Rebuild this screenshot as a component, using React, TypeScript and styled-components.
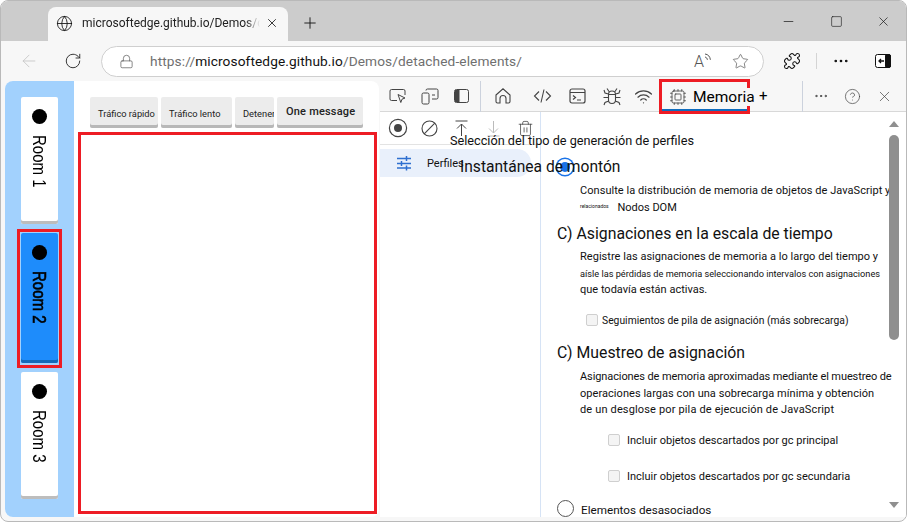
import styled, { createGlobalStyle } from "styled-components";
import {
  ArrowLeft,
  Cpu,
  Globe,
  Lock,
  Minus,
  MoreHorizontal,
  Plus,
  Puzzle,
  RotateCw,
  Square,
  Star,
  Trash2,
  Wifi,
  X,
  CircleHelp,
} from "lucide-react";

const rooms = [
  { name: "Room 1", height: 127, active: false },
  { name: "Room 2", height: 130, active: true },
  { name: "Room 3", height: 127, active: false },
];

const pageButtons = [
  { label: "Tráfico rápido", width: 68 },
  { label: "Tráfico lento", width: 71 },
  { label: "Detener", width: 39 },
];

export default function App() {
  return (
    <>
      <GlobalStyle />
      <Window>
        <TabStrip>
          <Tab>
            <Globe size={17} strokeWidth={1.2} />
            <TabTitle>microsoftedge.github.io/Demos/detached-elements/</TabTitle>
            <X size={14} strokeWidth={1.4} />
          </Tab>
          <NewTab>
            <Plus size={18} strokeWidth={1.2} />
          </NewTab>
          <WindowControls>
            <Minus size={15} strokeWidth={1.1} />
            <Square size={13} strokeWidth={1.1} />
            <X size={15} strokeWidth={1.1} />
          </WindowControls>
        </TabStrip>

        <Toolbar>
          <ToolbarIcon $color="#c4c4c4">
            <ArrowLeft size={20} strokeWidth={1} />
          </ToolbarIcon>
          <ToolbarIcon>
            <RotateCw size={18} strokeWidth={1.2} />
          </ToolbarIcon>
          <AddressBar>
            <Lock size={15} strokeWidth={1.1} />
            <Url>
              <Dim>https://</Dim>microsoftedge.github.io<Dim>/Demos/detached-elements/</Dim>
            </Url>
            <ReadAloud>
              A
              <svg width="10" height="11" viewBox="0 0 10 11" fill="none" stroke="#555" strokeWidth="1">
                <path d="M1 5c1.500.3 2.200 1.400 2.400 2.800M1 2c3.200.4 5 2.500 5.400 5.800" />
              </svg>
            </ReadAloud>
            <Star size={17} strokeWidth={1} />
          </AddressBar>
          <ToolbarEnd>
            <Puzzle size={18} strokeWidth={1.4} />
            <ToolbarDivider />
            <MoreHorizontal size={18} strokeWidth={1.6} />
            <SidebarIcon viewBox="0 0 16 14" width="16" height="14">
              <rect x="0.5" y="0.500" width="15" height="13" rx="2" fill="#fff" stroke="#111" />
              <rect x="10.500" y="0.500" width="5" height="13" rx="1.500" fill="#111" stroke="#111" />
              <path d="M9 7H4M6 5 4 7l2 2" stroke="#111" strokeWidth="1.300" fill="none" />
            </SidebarIcon>
          </ToolbarEnd>
        </Toolbar>

        <Content>
          <Page>
            <RoomRail>
              {rooms.map((room) => (
                <RoomTab key={room.name} $active={room.active} $height={room.height}>
                  <RoomDot />
                  <RoomLabel $active={room.active}>{room.name}</RoomLabel>
                </RoomTab>
              ))}
            </RoomRail>
            <ChatPane>
              <ButtonRow>
                {pageButtons.map((b) => (
                  <PageButton key={b.label} $width={b.width}>
                    {b.label}
                  </PageButton>
                ))}
                <MessageButton>One message</MessageButton>
              </ButtonRow>
              <ChatLog />
            </ChatPane>
          </Page>

          <DevTools>
            <DevTabs>
              <DevIcon $width={32}>
                <svg width="18" height="16" viewBox="0 0 18 16" fill="none" stroke="#444">
                  <path d="M8 12.500H2.500a1.500 1.500 0 0 1-1.500-1.500V3a1.500 1.500 0 0 1 1.500-1.500h12A1.500 1.500 0 0 1 16 3v4" />
                  <path d="M9 6.500l7 3.500-3 1.200-1.200 3.300z" />
                </svg>
              </DevIcon>
              <DevIcon $width={32}>
                <svg width="18" height="17" viewBox="0 0 18 17" fill="none" stroke="#444">
                  <rect x="1" y="5" width="7" height="11" rx="1.500" />
                  <path d="M5 2.500A1.500 1.500 0 0 1 6.500 1h9A1.500 1.500 0 0 1 17 2.500v7a1.500 1.500 0 0 1-1.500 1.500H11M11 7h3" />
                </svg>
              </DevIcon>
              <DevIcon $width={30}>
                <svg width="15" height="14" viewBox="0 0 15 14" fill="none" stroke="#444">
                  <rect x="0.500" y="0.500" width="14" height="13" rx="2" />
                  <rect x="1" y="1" width="4.500" height="12" fill="#444" stroke="none" />
                </svg>
              </DevIcon>
              <DevDivider />
              <DevIcon $width={44}>
                <svg width="18" height="18" viewBox="0 0 18 18" fill="none" stroke="#444" strokeWidth="1.100">
                  <path d="M2 8 9 1.800 16 8v6.500a1.500 1.500 0 0 1-1.500 1.500H12v-4.500a3 3 0 0 0-6 0V16H3.500A1.500 1.500 0 0 1 2 14.500z" />
                </svg>
              </DevIcon>
              <DevIcon $width={34}>
                <svg width="19" height="18" viewBox="0 0 19 18" fill="none" stroke="#444" strokeWidth="1.100">
                  <path d="M6 4.500 1.500 9 6 13.500M13 4.500 17.500 9 13 13.500M11 2.500 8 15.500" />
                </svg>
              </DevIcon>
              <DevIcon $width={36}>
                <svg width="17" height="16" viewBox="0 0 17 16" fill="none" stroke="#444" strokeWidth="1.200">
                  <rect x="1" y="1" width="15" height="14" rx="2" />
                  <path d="M1 4.500h15M4 7.500 6.500 9.500 4 11.500M8 12h4" />
                </svg>
              </DevIcon>
              <DevIcon $width={34}>
                <svg width="20" height="19" viewBox="0 0 20 19" fill="none" stroke="#444" strokeWidth="1.100">
                  <path d="M6.500 7.500a3.500 3.500 0 0 1 7 0V13a3.500 3.500 0 0 1-7 0z" />
                  <path d="M6.500 7.500h7M5 1.500 7.200 4.800M15 1.500 12.800 4.800M6.500 7 3 6 2 3M13.500 7 17 6 18 3M6.500 10.500H1.500M13.500 10.500h5M6.800 14 3 15.500 2 18M13.200 14 17 15.500 18 18" />
                </svg>
              </DevIcon>
              <DevIcon $width={28}>
                <Wifi size={19} strokeWidth={1.6} />
              </DevIcon>
              <MemoryTab>
                <Cpu size={18} strokeWidth={1.1} />
                <MemoryTitle>Memoria</MemoryTitle>
                <MemoryPlus>+</MemoryPlus>
              </MemoryTab>
              <DevTabsEnd>
                <MoreHorizontal size={16} strokeWidth={1.5} />
                <CircleHelp size={17} strokeWidth={1} />
                <X size={17} strokeWidth={1} />
              </DevTabsEnd>
            </DevTabs>

            <Panel>
              <ProfilesSide>
                <ProfilesTools>
                  <RecordIcon />
                  <svg width="17" height="17" viewBox="0 0 17 17" fill="none" stroke="#444" strokeWidth="1.100">
                    <circle cx="8.500" cy="8.500" r="7.500" />
                    <path d="M3.200 13.800 13.800 3.200" />
                  </svg>
                  <svg width="17" height="17" viewBox="0 0 17 17" fill="none" stroke="#444">
                    <path d="M2.500 1h12M8.500 16V4M4 8.500 8.500 4 13 8.500" />
                  </svg>
                  <svg width="17" height="17" viewBox="0 0 17 17" fill="none" stroke="#bbb">
                    <path d="M2.500 16h12M8.500 1v12M4 8.500 8.500 13 13 8.500" />
                  </svg>
                  <Trash2 size={17} strokeWidth={1.1} />
                </ProfilesTools>
                <ProfilesItem>
                  <svg width="16" height="16" viewBox="0 0 16 16" fill="none" stroke="#2e6fd0" strokeWidth="1.500">
                    <path d="M1 3.500h14M10.500 1v5M1 8.500h14M5.500 6v5M1 13h14M10.500 10.500V15.500" />
                  </svg>
                  <span>Perfiles</span>
                </ProfilesItem>
              </ProfilesSide>

              <ProfileOptions>
                <BlueRadio />
                <Paragraph $top={7} $lineHeight={17}>
                  <Line $spacing={0.05}>Consulte la distribución de memoria de objetos de JavaScript y</Line>
                  <Line>
                    <Tiny>relacionados</Tiny> Nodos DOM
                  </Line>
                </Paragraph>
                <Heading $top={7}>C) Asignaciones en la escala de tiempo</Heading>
                <Paragraph $top={4}>
                  <Line $spacing={0.03}>Registre las asignaciones de memoria a lo largo del tiempo y</Line>
                  <Line $size={9.200}>aísle las pérdidas de memoria seleccionando intervalos con asignaciones</Line>
                  <Line>que todavía están activas.</Line>
                </Paragraph>
                <CheckRow $indent={45} $top={12.5} $gap={4}>
                  <Check />
                  <CheckLabel $size={10.300} $spacing={0.02}>Seguimientos de pila de asignación (más sobrecarga)</CheckLabel>
                </CheckRow>
                <Heading $top={13}>C) Muestreo de asignación</Heading>
                <Paragraph $top={5}>
                  <Line $spacing={-0.1}>Asignaciones de memoria aproximadas mediante el muestreo de</Line>
                  <Line $spacing={0.05}>operaciones largas con una sobrecarga mínima y obtención</Line>
                  <Line $spacing={0.15}>de un desglose por pila de ejecución de JavaScript</Line>
                </Paragraph>
                <CheckRow $indent={67} $top={12.5} $gap={7}>
                  <Check />
                  <CheckLabel>Incluir objetos descartados por gc principal</CheckLabel>
                </CheckRow>
                <CheckRow $indent={67} $top={18} $gap={7}>
                  <Check />
                  <CheckLabel>Incluir objetos descartados por gc secundaria</CheckLabel>
                </CheckRow>
                <DetachedRow>
                  <EmptyRadio />
                  <span>Elementos desasociados</span>
                </DetachedRow>
              </ProfileOptions>

              <ScrollTrack>
                <ScrollArrow $dir="up" />
                <ScrollThumb />
                <ScrollArrow $dir="down" />
              </ScrollTrack>

              <SelectTitle>Selección del tipo de generación de perfiles</SelectTitle>
              <SnapshotTitle>Instantánea de montón</SnapshotTitle>
            </Panel>
          </DevTools>
        </Content>
      </Window>
    </>
  );
}

const font = `Roboto, "Noto Sans", "Liberation Sans", sans-serif`;

const GlobalStyle = createGlobalStyle`
  html, body {
    margin: 0;
    padding: 0;
    background: #fff;
  }
  * {
    box-sizing: border-box;
  }
`;

const Window = styled.div`
  width: 907px;
  height: 522px;
  display: flex;
  flex-direction: column;
  overflow: hidden;
  border: 1px solid #b9b9b9;
  border-radius: 8px;
  background: #f7f7f7;
  font-family: ${font};
  color: #111;
`;

const TabStrip = styled.div`
  height: 40px;
  flex: none;
  display: flex;
  align-items: flex-end;
  padding-left: 47px;
  background: #cccccc;
`;

const Tab = styled.div`
  width: 240px;
  height: 34px;
  display: flex;
  align-items: center;
  gap: 9px;
  padding: 0 9px 2px 8px;
  border-radius: 8px 8px 0 0;
  background: #f7f7f7;

  svg {
    flex: none;
  }
`;

const TabTitle = styled.span`
  flex: 1;
  margin-right: -4px;
  overflow: hidden;
  white-space: nowrap;
  font-size: 12px;
  color: #222;
  -webkit-mask-image: linear-gradient(to right, #000 92%, transparent);
  mask-image: linear-gradient(to right, #000 92%, transparent);
`;

const NewTab = styled.div`
  width: 43px;
  height: 34px;
  display: flex;
  align-items: center;
  justify-content: center;
  padding-bottom: 2px;
`;

const WindowControls = styled.div`
  margin-left: auto;
  width: 140px;
  height: 40px;
  display: flex;
  align-items: center;
  justify-content: space-between;
  padding: 0 15px 0 15px;
`;

const Toolbar = styled.div`
  height: 40px;
  flex: none;
  display: flex;
  align-items: center;
  background: #f7f7f7;
`;

const ToolbarIcon = styled.div<{ $color?: string }>`
  width: 44px;
  display: flex;
  justify-content: center;
  color: ${(p) => p.$color || "#222"};
  margin-left: 6px;
  margin-right: -6px;
`;

const AddressBar = styled.div`
  width: 663px;
  height: 31px;
  margin-left: 12px;
  display: flex;
  align-items: center;
  padding: 0 14px 0 17px;
  border: 1px solid #cfcfcf;
  border-radius: 16px;
  background: #fff;
  color: #555;
`;

const Url = styled.span`
  flex: 1;
  margin-left: 16px;
  font-size: 13.700px;
  letter-spacing: 0.1px;
  color: #111;
`;

const Dim = styled.span`
  color: #6f6f6f;
`;

const ReadAloud = styled.span`
  display: flex;
  align-items: flex-start;
  margin-right: 18px;
  font-size: 16px;
  font-weight: 300;
`;

const ToolbarEnd = styled.div`
  flex: 1;
  display: flex;
  align-items: center;
  padding-left: 19px;
`;

const ToolbarDivider = styled.div`
  width: 1px;
  height: 16px;
  margin: 0 15px 0 15px;
  background: #d4d4d4;
`;

const SidebarIcon = styled.svg`
  margin-left: 25px;
`;

const Content = styled.div`
  height: 436px;
  flex: none;
  display: flex;
  padding-left: 4px;
`;

const Page = styled.div`
  width: 374px;
  display: flex;
  overflow: hidden;
  border-radius: 8px;
  background: #fff;
`;

const RoomRail = styled.div`
  width: 69px;
  flex: none;
  display: flex;
  flex-direction: column;
  align-items: center;
  gap: 9px;
  padding: 16px 16px 0 16px;
  background: #a2d1fd;
`;

const RoomTab = styled.div<{ $active: boolean; $height: number }>`
  position: relative;
  width: 37px;
  height: ${(p) => p.$height}px;
  flex: none;
  display: flex;
  flex-direction: column;
  align-items: center;
  padding-top: 4px;
  border-radius: 2px;
  background: ${(p) => (p.$active ? "#1e8cfb" : "#fff")};
  box-shadow: inset 0 -3px 0 ${(p) => (p.$active ? "#1569b8" : "#bdbdbd")};

  ${(p) =>
    p.$active &&
    `&::after {
      content: "";
      position: absolute;
      inset: -4px -4px -5px -4px;
      border: 3px solid #ed1c24;
    }`}
`;

const RoomDot = styled.span`
  width: 15px;
  height: 15px;
  margin-top: 8px;
  border-radius: 50%;
  background: #000;
`;

const RoomLabel = styled.span<{ $active: boolean }>`
  margin-top: 11px;
  writing-mode: vertical-rl;
  transform: scaleX(1.2);
  font-family: "Liberation Sans", sans-serif;
  font-size: 15px;
  -webkit-text-stroke: ${(p) => (p.$active ? "0.5px #000" : "0")};
  color: #000;
`;

const ChatPane = styled.div`
  flex: 1;
  display: flex;
  flex-direction: column;
  padding: 16px 2px 3px 4px;
`;

const ButtonRow = styled.div`
  height: 35px;
  flex: none;
  display: flex;
  align-items: flex-start;
  gap: 3px;
  padding-left: 12px;
`;

const PageButton = styled.div<{ $width: number }>`
  width: ${(p) => p.$width}px;
  height: 31px;
  overflow: hidden;
  display: flex;
  align-items: center;
  padding: 1px 0 0 8px;
  border-radius: 2px;
  background: #ececec;
  box-shadow: inset 0 -3px 0 #b8b8b8;
  font-size: 9.300px;
  white-space: nowrap;
  color: #222;
`;

const MessageButton = styled(PageButton).attrs({ $width: 86 })`
  padding: 0 0 3px 9px;
  font-size: 11px;
  font-weight: 500;
  letter-spacing: 0.2px;
`;

const ChatLog = styled.div`
  flex: 1;
  border: 3px solid #ed1c24;
`;

const DevTools = styled.div`
  flex: 1;
  display: flex;
  flex-direction: column;
  min-width: 0;
  margin-left: 1px;
  background: #fff;
`;

const DevTabs = styled.div`
  height: 31px;
  flex: none;
  display: flex;
  align-items: center;
  padding-left: 2px;
  border-bottom: 1px solid #d8d8d8;
  background: #f7f7f7;
  color: #444;
`;

const DevIcon = styled.div<{ $width: number }>`
  width: ${(p) => p.$width}px;
  flex: none;
  display: flex;
  justify-content: center;
  color: #444;
`;

const DevDivider = styled.div`
  width: 1px;
  height: 31px;
  margin-left: 4px;
  background: #ccd2dd;
`;

const MemoryTab = styled.div`
  position: relative;
  width: 91px;
  height: 35px;
  flex: none;
  margin: -2px 0 0 2px;
  align-self: flex-start;
  display: flex;
  align-items: center;
  padding-left: 7px;
  border: 3px solid #ed1c24;
  box-shadow: inset 0 -2px 0 #0f6cbd;

  svg {
    flex: none;
  }
`;

const MemoryTitle = styled.span`
  position: relative;
  margin-left: 6px;
  background: #f7f7f7;
  font-size: 15.500px;
  color: #000;
`;

const MemoryPlus = styled.span`
  position: absolute;
  left: 97px;
  top: 5px;
  font-size: 15px;
  color: #000;
`;

const DevTabsEnd = styled.div`
  margin-left: auto;
  width: 104px;
  height: 31px;
  flex: none;
  display: flex;
  align-items: center;
  justify-content: space-between;
  padding: 0 13px 0 10px;
  border-left: 1px solid #ccd2dd;
`;

const Panel = styled.div`
  position: relative;
  flex: 1;
  display: flex;
  min-height: 0;
`;

const ProfilesSide = styled.div`
  width: 161px;
  flex: none;
  border-right: 1px solid #d6e3f5;
`;

const ProfilesTools = styled.div`
  height: 33px;
  display: flex;
  align-items: center;
  gap: 15px;
  padding-left: 10px;
  border-bottom: 1px solid #e3e3e3;
  color: #444;
`;

const RecordIcon = styled.span`
  width: 16px;
  height: 16px;
  border-radius: 50%;
  border: 4px solid #fff;
  background: #444;
  box-shadow: 0 0 0 1.200px #444;
`;

const ProfilesItem = styled.div`
  width: 151px;
  height: 28px;
  margin-top: 4px;
  display: flex;
  align-items: center;
  gap: 15px;
  padding-left: 16px;
  border-radius: 0 14px 14px 0;
  background: #e9f0fb;
  font-size: 11px;
`;

const ProfileOptions = styled.div`
  flex: 1;
  min-width: 0;
  padding: 47px 0 0 16px;
  color: #111;
`;

const BlueRadio = styled.div`
  width: 16px;
  height: 16px;
  border-radius: 50%;
  border: 3px solid #fff;
  background: #1a73e8;
  box-shadow: 0 0 0 1.500px #1a73e8;
`;

const Paragraph = styled.div<{ $top: number; $lineHeight?: number }>`
  margin-top: ${(p) => p.$top}px;
  margin-left: 23px;
  line-height: ${(p) => p.$lineHeight || 16.5}px;
`;

const Line = styled.div<{ $size?: number; $spacing?: number }>`
  white-space: nowrap;
  font-size: ${(p) => p.$size || 11}px;
  letter-spacing: ${(p) => p.$spacing || 0}px;
`;

const Tiny = styled.span`
  font-size: 5px;
  line-height: 0;
  vertical-align: 3px;
  margin-right: 6px;
`;

const Heading = styled.div<{ $top: number }>`
  margin-top: ${(p) => p.$top}px;
  height: 22px;
  line-height: 22px;
  font-size: 15.800px;
  white-space: nowrap;
`;

const CheckRow = styled.div<{ $indent: number; $top: number; $gap: number }>`
  height: 18px;
  margin-top: ${(p) => p.$top}px;
  margin-left: ${(p) => p.$indent - 16}px;
  display: flex;
  align-items: center;
  gap: ${(p) => p.$gap}px;
`;

const Check = styled.span`
  width: 12px;
  height: 12px;
  flex: none;
  border: 1px solid #cfcfcf;
  border-radius: 2px;
  background: #f4f4f4;
`;

const CheckLabel = styled.span<{ $size?: number; $spacing?: number }>`
  font-size: ${(p) => p.$size || 11}px;
  letter-spacing: ${(p) => p.$spacing || 0}px;
  white-space: nowrap;
`;

const DetachedRow = styled.div`
  margin-top: 14px;
  display: flex;
  align-items: center;
  gap: 7px;
  font-size: 11.700px;
  white-space: nowrap;

  span:last-child {
    padding-top: 4px;
  }
`;

const EmptyRadio = styled.span`
  width: 17px;
  height: 17px;
  border: 1px solid #555;
  border-radius: 50%;
`;

const ScrollTrack = styled.div`
  width: 17px;
  flex: none;
  display: flex;
  flex-direction: column;
  align-items: center;
  padding: 9px 0 9px;
  margin-right: 4px;
`;

const ScrollThumb = styled.div`
  width: 10px;
  height: 205px;
  margin-top: 8px;
  margin-bottom: auto;
  border-radius: 5px;
  background: #8f8f8f;
`;

const ScrollArrow = styled.span<{ $dir: "up" | "down" }>`
  width: 0;
  height: 0;
  border-left: 5px solid transparent;
  border-right: 5px solid transparent;
  ${(p) => (p.$dir === "up" ? "border-bottom: 6px solid #8f8f8f;" : "border-top: 6px solid #8f8f8f;")}
`;

const SelectTitle = styled.span`
  position: absolute;
  left: 70px;
  top: 21px;
  font-size: 12.700px;
  white-space: nowrap;
`;

const SnapshotTitle = styled.span`
  position: absolute;
  left: 80px;
  top: 46px;
  font-size: 15.600px;
  white-space: nowrap;
`;
